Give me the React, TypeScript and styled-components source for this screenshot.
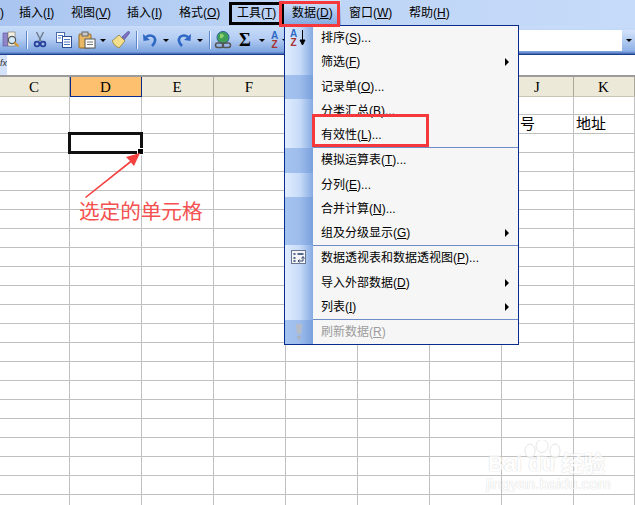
import React from 'react';
import styled, { createGlobalStyle, css } from 'styled-components';

const UI_FONT = '"Liberation Sans", "Noto Sans CJK SC", sans-serif';

const GlobalStyle = createGlobalStyle`
    html, body {
        margin: 0;
        padding: 0;
        background: #fff;
    }
`;

const Page = styled.div`
    position: relative;
    width: 635px;
    height: 505px;
    overflow: hidden;
    display: flex;
    flex-direction: column;
    font-family: ${UI_FONT};
    font-size: 12px;
    color: #000;
    background: #fff;
`;

const MenuBar = styled.div`
    display: flex;
    align-items: center;
    height: 26px;
    flex: none;
    line-height: 16px;
    background: linear-gradient(90deg, #a9c5f0 0%, #bdd4f6 45%, #c6dbf9 100%);
`;

const MenuButton = styled.div<{ $w: number; $open?: boolean; $bare?: boolean }>`
    width: ${(p) => p.$w}px;
    box-sizing: border-box;
    padding-left: ${(p) => (p.$bare ? 0 : 8)}px;
    height: 100%;
    display: flex;
    align-items: center;
    white-space: nowrap;
    ${(p) => p.$open && css`
        background: linear-gradient(180deg, #d5e4fb 0%, #7ea5e0 100%);
    `}
`;

const Toolbar = styled.div`
    display: flex;
    align-items: center;
    height: 28px;
    flex: none;
    background: linear-gradient(180deg, #c9ddf9 0%, #b4cdf3 45%, #7ea4e0 92%, #3f63ad 100%);
`;

const Slot = styled.div<{ $left: number; $w?: number }>`
    width: ${(p) => p.$w ?? 18}px;
    height: 18px;
    margin-left: ${(p) => p.$left}px;
    flex: none;
    display: flex;
    align-items: center;
    justify-content: center;
`;

const SigmaSlot = styled(Slot)`
    font-family: "Liberation Serif", serif;
    font-weight: 700;
    font-size: 18px;
    line-height: 18px;
`;

const Caret = styled.div<{ $left: number }>`
    width: 0;
    height: 0;
    margin-left: ${(p) => p.$left}px;
    flex: none;
    border-left: 3px solid transparent;
    border-right: 3px solid transparent;
    border-top: 3px solid #000;
`;

const ToolSep = styled.div<{ $left: number }>`
    width: 1px;
    height: 18px;
    margin-left: ${(p) => p.$left}px;
    flex: none;
    background: #5f86c8;
    border-right: 1px solid #f2f7ff;
`;

const NameCombo = styled.div`
    margin-left: auto;
    width: 130px;
    height: 21px;
    flex: none;
    display: flex;
    justify-content: flex-end;
    background: #fff;
`;

const ComboButton = styled.div`
    width: 13px;
    display: flex;
    align-items: center;
    justify-content: center;
    background: linear-gradient(180deg, #d5e4fb 0%, #8fb1e6 100%);
`;

const FormulaBar = styled.div`
    display: flex;
    flex: none;
    background: #fff;
    border-top: 1px solid #1d3f8f;
    border-bottom: 2px solid #9b9b9b;
    box-sizing: border-box;
    height: 23px;
`;

const FormulaLabel = styled.div`
    width: 7px;
    background: #d3e2fa;
    overflow: hidden;
    font-size: 9px;
    font-style: italic;
    line-height: 17px;
    color: #333;
`;

const Sheet = styled.div`
    display: grid;
    grid-template-columns: 70px repeat(7, 72px) 61px;
    grid-auto-rows: 19px;
    grid-template-rows: 20px 18px;
    flex: none;
`;

const ColumnHead = styled.div<{ $active?: boolean }>`
    display: flex;
    align-items: center;
    justify-content: center;
    box-sizing: border-box;
    padding-top: 1px;
    padding-right: 1px;
    font-family: "Liberation Serif", serif;
    font-size: 15px;
    background: ${(p) => (p.$active ? '#fdc06f' : '#ece9d8')};
    border-right: 1px solid ${(p) => (p.$active ? '#0a2a8c' : '#aca899')};
    border-bottom: 1px solid ${(p) => (p.$active ? '#0a2a8c' : '#c9c6b6')};
    ${(p) => p.$active && 'border-left: 1px solid #0a2a8c;'}
`;

const Cell = styled.div<{ $selected?: boolean; $indent?: number }>`
    position: relative;
    box-sizing: border-box;
    border-right: 1px solid #c0c0c0;
    border-bottom: 1px solid #c0c0c0;
    font-size: 15px;
    line-height: 18px;
    white-space: nowrap;
    padding-left: ${(p) => p.$indent ?? 0}px;
    ${(p) => p.$selected && css`
        &::before {
            content: '';
            position: absolute;
            left: -2px;
            top: -2px;
            right: -2px;
            bottom: -2px;
            border: 3px solid #111;
            z-index: 1;
        }
        &::after {
            content: '';
            position: absolute;
            right: -3px;
            bottom: -3px;
            width: 5px;
            height: 5px;
            background: #000;
            border: 1px solid #fff;
            box-sizing: content-box;
            z-index: 2;
        }
    `}
`;

const Dropdown = styled.div`
    position: absolute;
    left: 284px;
    top: 25px;
    width: 235px;
    box-sizing: border-box;
    border: 1px solid #0a2a8c;
    background: #f6f6f6;
    display: flex;
    flex-direction: column;
    z-index: 3;
`;

const MenuItem = styled.div`
    display: flex;
    align-items: center;
    height: 24.25px;
`;

const LIGHT_GUTTER = 'linear-gradient(90deg, #e0edff 0%, #c6daf8 55%, #86aae1 100%)';
const DARK_GUTTER = 'linear-gradient(90deg, #a5c3ef 0%, #9ebdec 50%, #7aa1dd 100%)';

const Gutter = styled.div<{ $dark?: boolean }>`
    width: 28px;
    height: 100%;
    flex: none;
    display: flex;
    align-items: center;
    justify-content: center;
    background: ${(p) => (p.$dark ? DARK_GUTTER : LIGHT_GUTTER)};
`;

const ItemLabel = styled.div<{ $disabled?: boolean }>`
    margin-left: 8px;
    flex: 1;
    line-height: 16px;
    white-space: nowrap;
    color: ${(p) => (p.$disabled ? '#9c9c9c' : '#000')};
`;

const SubArrow = styled.div`
    width: 0;
    height: 0;
    margin-right: 9px;
    border-top: 4px solid transparent;
    border-bottom: 4px solid transparent;
    border-left: 4px solid #000;
`;

const MenuSep = styled.div`
    display: flex;
    height: 1px;
    &::before {
        content: '';
        width: 28px;
        background: ${LIGHT_GUTTER};
    }
    &::after {
        content: '';
        flex: 1;
        background: #6e8dc6;
    }
`;

const Highlight = styled.div<{ $x: number; $y: number; $w: number; $h: number; $color: string }>`
    position: absolute;
    left: ${(p) => p.$x}px;
    top: ${(p) => p.$y}px;
    width: ${(p) => p.$w}px;
    height: ${(p) => p.$h}px;
    box-sizing: border-box;
    border: 3px solid ${(p) => p.$color};
    z-index: 4;
`;

const ArrowMark = styled.svg`
    position: absolute;
    left: 80px;
    top: 150px;
    z-index: 2;
`;

const Callout = styled.div`
    position: absolute;
    left: 79px;
    top: 198px;
    font-size: 20.6px;
    line-height: 28px;
    color: #f4504f;
    white-space: nowrap;
    z-index: 2;
`;

const Watermark = styled.div`
    position: absolute;
    left: 486px;
    top: 440px;
    width: 130px;
    height: 56px;
    z-index: 2;
    opacity: 0.7;
`;

const WatermarkBrand = styled.div`
    position: absolute;
    left: 2px;
    top: 14px;
    font-size: 22px;
    font-weight: 700;
    line-height: 20px;
    color: #fff;
    text-shadow: 0 0 1px #ccc, 0 0 1px #ccc;
    white-space: nowrap;
`;

const WatermarkUrl = styled.div`
    position: absolute;
    left: 0;
    top: 35px;
    font-size: 15.5px;
    line-height: 18px;
    color: #fff;
    text-shadow: 0 0 1px #ccc, 0 0 1px #ccc;
    white-space: nowrap;
`;

const Accel: React.FC<{ label: string; k: string; tail?: string }> = ({ label, k, tail }) => (
    <span>{label}(<u>{k}</u>){tail}</span>
);

const PreviewIcon = () => (
    <svg width="18" height="18" viewBox="0 0 18 18">
        <rect x="1" y="2" width="5" height="13" fill="#8f86c9" stroke="#5a4f96" strokeWidth="0.6" />
        <rect x="6" y="1" width="7" height="14" fill="#f7f3e4" stroke="#77705a" strokeWidth="0.6" />
        <circle cx="10" cy="9" r="3.6" fill="#d6ecf7" stroke="#55585e" strokeWidth="1.2" />
        <path d="M12.5 11.5 L16.5 15.5" stroke="#d49a2e" strokeWidth="2.2" />
    </svg>
);

const CutIcon = () => (
    <svg width="18" height="18" viewBox="0 0 18 18">
        <path d="M5.5 1 L10 10 M12.5 1 L8 10" stroke="#6d7a8c" strokeWidth="1.4" />
        <circle cx="6" cy="13" r="2.4" fill="none" stroke="#26409a" strokeWidth="1.7" />
        <circle cx="12" cy="13" r="2.4" fill="none" stroke="#26409a" strokeWidth="1.7" />
    </svg>
);

const CopyIcon = () => (
    <svg width="18" height="18" viewBox="0 0 18 18">
        <rect x="1.5" y="1.5" width="8" height="10" fill="#fff" stroke="#4d6aa8" />
        <rect x="7.5" y="5.5" width="9" height="11" fill="#fff" stroke="#2f4f96" />
        <path d="M3 4.5h5M3 7h3M9 8.5h6M9 11h6M9 13.5h6" stroke="#4d78c4" />
    </svg>
);

const PasteIcon = () => (
    <svg width="18" height="18" viewBox="0 0 18 18">
        <rect x="1" y="3" width="12" height="14" rx="1" fill="#e8b864" stroke="#8f6a25" />
        <rect x="4" y="1" width="6" height="4" fill="#c9c9c9" stroke="#666" />
        <rect x="7" y="8" width="10" height="9" fill="#fff" stroke="#555" />
        <path d="M9 11h6M9 13.5h6" stroke="#777" />
    </svg>
);

const BrushIcon = () => (
    <svg width="18" height="18" viewBox="0 0 18 18">
        <path d="M0 10 L7 4 L13 10 L7 17 Q2 15 0 10 Z" fill="#f3de8c" stroke="#8f7e3d" strokeWidth="0.8" />
        <path d="M10 6 L16.5 0 L18 1.5 L12.5 8.5 Z" fill="#7d6fc0" stroke="#4e4494" strokeWidth="0.6" />
    </svg>
);

const UndoIcon: React.FC<{ flip?: boolean }> = ({ flip }) => (
    <svg width="18" height="18" viewBox="0 0 18 18">
        <g transform={flip ? 'translate(18 0) scale(-1 1)' : undefined}>
            <path d="M5 6 Q9 3 13 6 Q16 10 11 15" fill="none" stroke="#2f68c4" strokeWidth="2.6" />
            <path d="M2 3 L2.5 10 L9 9 Z" fill="#2f68c4" />
        </g>
    </svg>
);

const LinkIcon = () => (
    <svg width="18" height="18" viewBox="0 0 18 18">
        <circle cx="9" cy="6.5" r="6" fill="#3f9f55" stroke="#2a5f9f" />
        <path d="M6 3 Q9 2 10 5 Q8 8 6 7Z" fill="#8fd06f" />
        <rect x="1.5" y="12" width="8" height="4.5" rx="2.2" fill="none" stroke="#555" strokeWidth="1.5" />
        <rect x="8.5" y="12" width="8" height="4.5" rx="2.2" fill="none" stroke="#555" strokeWidth="1.5" />
    </svg>
);

const SortIcon: React.FC<{ arrow?: boolean }> = ({ arrow }) => (
    <svg width={arrow ? 18 : 9} height="18" viewBox={arrow ? '0 0 18 18' : '0 0 9 18'}>
        <text x="0" y="8" fontFamily="Liberation Sans" fontWeight="700" fontSize="10" fill="#2f68c4">A</text>
        <text x="0.5" y="17" fontFamily="Liberation Sans" fontWeight="700" fontSize="10" fill="#a83232">Z</text>
        {arrow && <path d="M12.5 1 V14 M10 11 L12.5 16 L15 11 Z" stroke="#000" fill="#000" strokeWidth="1" />}
    </svg>
);

const PivotIcon = () => (
    <svg width="18" height="18" viewBox="0 0 18 18">
        <rect x="1.5" y="1.5" width="14" height="13" fill="#f4f4f4" stroke="#6b7690" />
        <path d="M3.5 4h2v2h-2zM7.5 4h6v2h-6zM3.5 8h2v2h-2zM3.5 11h2v2h-2z" fill="#55688f" />
        <path d="M8 12 H13 V8 M11.5 9.5 L13 7.5 L14.5 9.5 M9.5 10.5 L8 12 L9.5 13.5" fill="none" stroke="#33456f" />
    </svg>
);

const RefreshIcon = () => (
    <svg width="14" height="18" viewBox="0 0 14 18">
        <path d="M3.5 1 H10.5 L9 11 H5 Z" fill="#b4bcc9" />
        <circle cx="7" cy="14.5" r="2" fill="#aab2c0" />
    </svg>
);

const COLUMNS = ['C', 'D', 'E', 'F', 'G', 'H', 'I', 'J', 'K'];
const ROW_COUNT = 22;

const cellContent = (row: number, col: string) => {
    if (row === 1 && col === 'J') return { text: '号', indent: 18 };
    if (row === 1 && col === 'K') return { text: '地址', indent: 2 };
    return { text: '', indent: 0 };
};

const App: React.FC = () => {
    return (
        <Page>
            <GlobalStyle />
            <MenuBar>
                <MenuButton $w={11} $bare>)</MenuButton>
                <MenuButton $w={52}><Accel label="插入" k="I" /></MenuButton>
                <MenuButton $w={56}><Accel label="视图" k="V" /></MenuButton>
                <MenuButton $w={52}><Accel label="插入" k="I" /></MenuButton>
                <MenuButton $w={58}><Accel label="格式" k="O" /></MenuButton>
                <MenuButton $w={55}><Accel label="工具" k="T" /></MenuButton>
                <MenuButton $w={57} $open><Accel label="数据" k="D" /></MenuButton>
                <MenuButton $w={60}><Accel label="窗口" k="W" /></MenuButton>
                <MenuButton $w={60}><Accel label="帮助" k="H" /></MenuButton>
            </MenuBar>

            <Toolbar>
                <Slot $left={2}><PreviewIcon /></Slot>
                <ToolSep $left={6} />
                <Slot $left={3}><CutIcon /></Slot>
                <Slot $left={6}><CopyIcon /></Slot>
                <Slot $left={5}><PasteIcon /></Slot>
                <Caret $left={4} />
                <Slot $left={6}><BrushIcon /></Slot>
                <ToolSep $left={6} />
                <Slot $left={3}><UndoIcon /></Slot>
                <Caret $left={4} />
                <Slot $left={6}><UndoIcon flip /></Slot>
                <Caret $left={4} />
                <ToolSep $left={6} />
                <Slot $left={3}><LinkIcon /></Slot>
                <SigmaSlot $left={4}>Σ</SigmaSlot>
                <Caret $left={5} />
                <Slot $left={6} $w={9}><SortIcon /></Slot>
                <Caret $left={2} />
                <NameCombo>
                    <ComboButton><Caret $left={0} /></ComboButton>
                </NameCombo>
            </Toolbar>

            <FormulaBar>
                <FormulaLabel>fx</FormulaLabel>
            </FormulaBar>

            <Sheet>
                {COLUMNS.map((col) => (
                    <ColumnHead key={col} $active={col === 'D'}>{col}</ColumnHead>
                ))}
                {Array.from({ length: ROW_COUNT }).flatMap((_, row) =>
                    COLUMNS.map((col) => {
                        const { text, indent } = cellContent(row, col);
                        return (
                            <Cell key={`${col}${row}`} $indent={indent} $selected={row === 2 && col === 'D'}>
                                {text}
                            </Cell>
                        );
                    })
                )}
            </Sheet>

            <Dropdown>
                <MenuItem><Gutter><SortIcon arrow /></Gutter><ItemLabel><Accel label="排序" k="S" tail="..." /></ItemLabel></MenuItem>
                <MenuItem><Gutter /><ItemLabel><Accel label="筛选" k="F" /></ItemLabel><SubArrow /></MenuItem>
                <MenuItem><Gutter $dark /><ItemLabel><Accel label="记录单" k="O" tail="..." /></ItemLabel></MenuItem>
                <MenuItem><Gutter /><ItemLabel><Accel label="分类汇总" k="B" tail="..." /></ItemLabel></MenuItem>
                <MenuItem><Gutter /><ItemLabel><Accel label="有效性" k="L" tail="..." /></ItemLabel></MenuItem>
                <MenuSep />
                <MenuItem><Gutter $dark /><ItemLabel><Accel label="模拟运算表" k="T" tail="..." /></ItemLabel></MenuItem>
                <MenuItem><Gutter /><ItemLabel><Accel label="分列" k="E" tail="..." /></ItemLabel></MenuItem>
                <MenuItem><Gutter $dark /><ItemLabel><Accel label="合并计算" k="N" tail="..." /></ItemLabel></MenuItem>
                <MenuItem><Gutter $dark /><ItemLabel><Accel label="组及分级显示" k="G" /></ItemLabel><SubArrow /></MenuItem>
                <MenuSep />
                <MenuItem><Gutter><PivotIcon /></Gutter><ItemLabel><Accel label="数据透视表和数据透视图" k="P" tail="..." /></ItemLabel></MenuItem>
                <MenuItem><Gutter /><ItemLabel><Accel label="导入外部数据" k="D" /></ItemLabel><SubArrow /></MenuItem>
                <MenuItem><Gutter /><ItemLabel><Accel label="列表" k="I" /></ItemLabel><SubArrow /></MenuItem>
                <MenuSep />
                <MenuItem><Gutter $dark><RefreshIcon /></Gutter><ItemLabel $disabled><Accel label="刷新数据" k="R" /></ItemLabel></MenuItem>
            </Dropdown>

            <Highlight $x={229} $y={2} $w={55} $h={23} $color="#000" />
            <Highlight $x={279} $y={1} $w={61} $h={26} $color="#f5383b" />
            <Highlight $x={312} $y={114} $w={117} $h={33} $color="#f5383b" />

            <ArrowMark width="64" height="52" viewBox="0 0 64 52">
                <path d="M5 47 L50 11 L46 7 L60 3 L54 16 L51 12.5 L6 48 Z" fill="#f4403f" />
            </ArrowMark>
            <Callout>选定的单元格</Callout>

            <Watermark>
                <svg width="130" height="30" viewBox="0 0 130 30">
                    <g fill="#fff" stroke="#dcdcdc">
                        <ellipse cx="44" cy="11" rx="5" ry="7" />
                        <ellipse cx="56" cy="6" rx="6" ry="6.5" />
                        <ellipse cx="69" cy="11" rx="5" ry="7" />
                        <ellipse cx="56" cy="25" rx="12" ry="9" />
                    </g>
                </svg>
                <WatermarkBrand>Bai du 经验</WatermarkBrand>
                <WatermarkUrl>jingyan.baidu.com</WatermarkUrl>
            </Watermark>
        </Page>
    );
};

export default App;
